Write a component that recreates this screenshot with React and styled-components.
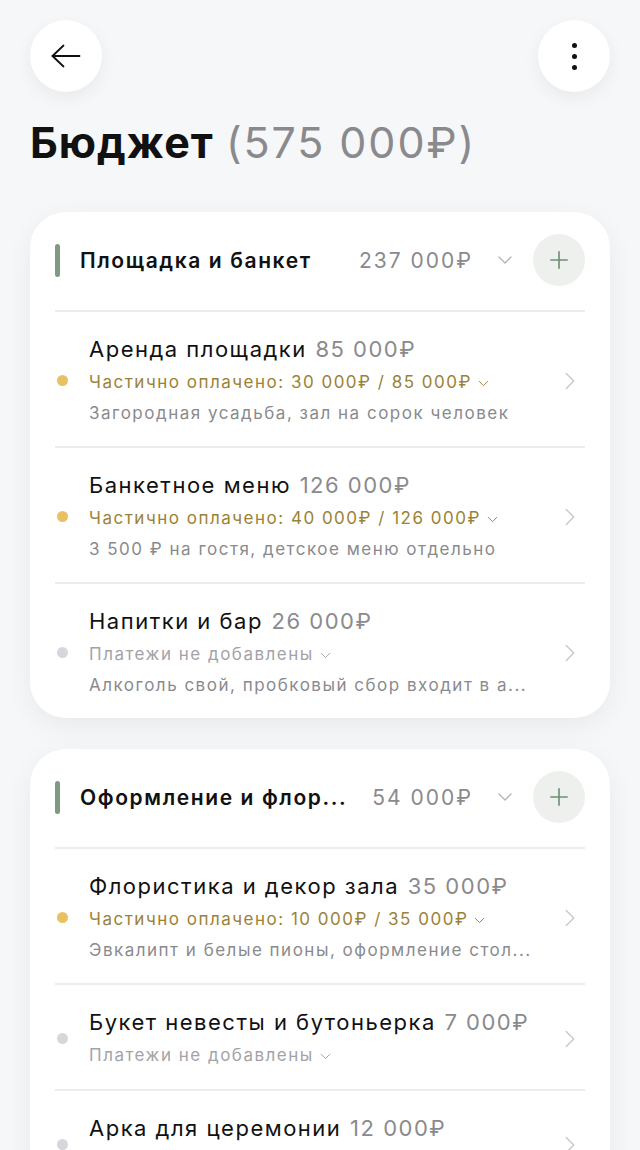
import React from "react";
import styled, { createGlobalStyle } from "styled-components";
import { Plus, ChevronDown, ChevronRight } from "lucide-react";

const GlobalStyle = createGlobalStyle`
  html, body {
    margin: 0;
    padding: 0;
    background: #f6f7f9;
  }
  body {
    font-family: Inter, "Noto Sans", sans-serif;
    color: #111;
    -webkit-font-smoothing: antialiased;
  }
`;

const sections = [
  {
    title: "Площадка и банкет",
    total: "237 000₽",
    items: [
      {
        name: "Аренда площадки",
        price: "85 000₽",
        status: "partial",
        statusText: "Частично оплачено: 30 000₽ / 85 000₽",
        note: "Загородная усадьба, зал на сорок человек",
      },
      {
        name: "Банкетное меню",
        price: "126 000₽",
        status: "partial",
        statusText: "Частично оплачено: 40 000₽ / 126 000₽",
        note: "3 500 ₽ на гостя, детское меню отдельно",
      },
      {
        name: "Напитки и бар",
        price: "26 000₽",
        status: "none",
        statusText: "Платежи не добавлены",
        note: "Алкоголь свой, пробковый сбор входит в а...",
      },
    ],
  },
  {
    title: "Оформление и флор...",
    total: "54 000₽",
    items: [
      {
        name: "Флористика и декор зала",
        price: "35 000₽",
        status: "partial",
        statusText: "Частично оплачено: 10 000₽ / 35 000₽",
        note: "Эвкалипт и белые пионы, оформление стол...",
      },
      {
        name: "Букет невесты и бутоньерка",
        price: "7 000₽",
        status: "none",
        statusText: "Платежи не добавлены",
      },
      {
        name: "Арка для церемонии",
        price: "12 000₽",
        status: "none",
        statusText: "Платежи не добавлены",
      },
    ],
  },
];

const BackArrow = () => (
  <svg width="30" height="24" viewBox="0 0 30 24" fill="none" stroke="#111" strokeWidth="1.8" strokeLinecap="round" strokeLinejoin="round">
    <path d="M28.5 12H1.5" />
    <path d="M12.5 1.5L1.5 12l11 10.5" />
  </svg>
);

export default function App() {
  return (
    <>
      <GlobalStyle />
      <Page>
        <TopBar>
          <RoundButton aria-label="Назад">
            <BackArrow />
          </RoundButton>
          <RoundButton aria-label="Меню">
            <Kebab>
              <span />
              <span />
              <span />
            </Kebab>
          </RoundButton>
        </TopBar>

        <Title>
          Бюджет <Muted>(575 000₽)</Muted>
        </Title>

        {sections.map((s) => (
          <Card key={s.title}>
            <CardHeader>
              <Accent />
              <SectionName>{s.title}</SectionName>
              <SectionTotal>{s.total}</SectionTotal>
              <ChevronDown size={24} strokeWidth={1.3} color="#b3b3b6" />
              <AddButton aria-label="Добавить">
                <Plus size={28} strokeWidth={1.4} />
              </AddButton>
            </CardHeader>

            {s.items.map((it) => (
              <Item key={it.name}>
                <Dot $status={it.status} />
                <ItemBody>
                  <ItemTitle>
                    {it.name} <Price>{it.price}</Price>
                  </ItemTitle>
                  <Status $status={it.status}>
                    {it.statusText}
                    <ChevronDown size={17} strokeWidth={1.4} />
                  </Status>
                  {it.note && <Note>{it.note}</Note>}
                </ItemBody>
                <ChevronRight size={30} strokeWidth={1.1} color="#c8c8cc" />
              </Item>
            ))}
          </Card>
        ))}
      </Page>
    </>
  );
}

const Page = styled.div`
  padding: 20px 30px 40px;
  box-sizing: border-box;
  width: 640px;
`;

const TopBar = styled.div`
  display: flex;
  justify-content: space-between;
  align-items: center;
`;

const RoundButton = styled.button`
  width: 72px;
  height: 72px;
  border-radius: 50%;
  border: none;
  background: #fff;
  box-shadow: 0 6px 18px rgba(0, 0, 0, 0.06);
  display: flex;
  align-items: center;
  justify-content: center;
  color: #111;
  padding: 0;
`;

const Kebab = styled.div`
  display: flex;
  flex-direction: column;
  gap: 6px;

  span {
    width: 5px;
    height: 5px;
    border-radius: 50%;
    background: #111;
  }
`;

const Title = styled.h1`
  margin: 22px 0 42px;
  font-size: 43px;
  line-height: 56px;
  font-weight: 700;
  letter-spacing: 1px;
`;

const Muted = styled.span`
  font-weight: 400;
  color: #8a8a8e;
  letter-spacing: 1.9px;
  margin-left: 1px;
`;

const Card = styled.section`
  background: #fff;
  border-radius: 36px;
  padding: 0 25px;
  margin-bottom: 31px;
  box-shadow: 0 8px 28px rgba(0, 0, 0, 0.06);
`;

const CardHeader = styled.div`
  display: flex;
  align-items: center;
  padding: 22px 0 24px;
  border-bottom: 2px solid #ececee;
`;

const Accent = styled.div`
  width: 5px;
  height: 33px;
  border-radius: 3px;
  background: #7f9a82;
  margin-right: 20px;
  flex-shrink: 0;
`;

const SectionName = styled.div`
  flex: 1;
  font-size: 21px;
  font-weight: 600;
  letter-spacing: 1.6px;
  white-space: nowrap;
  overflow: hidden;
  text-overflow: ellipsis;
`;

const SectionTotal = styled.div`
  font-size: 21px;
  color: #8a8a8e;
  letter-spacing: 2px;
  margin: 0 20px 0 12px;
  white-space: nowrap;
`;

const AddButton = styled.button`
  width: 52px;
  height: 52px;
  border-radius: 50%;
  border: none;
  background: #eef0ee;
  color: #6f8f72;
  display: flex;
  align-items: center;
  justify-content: center;
  margin-left: 16px;
  padding: 0;
`;

const Item = styled.div`
  display: grid;
  grid-template-columns: 34px 1fr 30px;
  align-items: center;
  padding: 21px 0 18px;
  border-bottom: 2px solid #ececee;

  &:last-child {
    border-bottom: none;
  }
`;

const Dot = styled.span`
  width: 11px;
  height: 11px;
  border-radius: 50%;
  margin-left: 2px;
  background: ${(p) => (p.$status === "partial" ? "#e8c262" : "#d6d6dc")};
`;

const ItemBody = styled.div`
  min-width: 0;
`;

const ItemTitle = styled.div`
  font-size: 22px;
  line-height: 33px;
  letter-spacing: 1.5px;
  color: #111;
  white-space: nowrap;
`;

const Price = styled.span`
  color: #8a8a8e;
  margin-left: 1px;
`;

const Status = styled.div`
  font-size: 17px;
  line-height: 32px;
  letter-spacing: 1.5px;
  display: flex;
  align-items: center;
  gap: 3px;
  color: ${(p) => (p.$status === "partial" ? "#9b8236" : "#a3a3a8")};

  svg {
    margin-top: 2px;
    flex-shrink: 0;
  }
`;

const Note = styled.div`
  font-size: 17px;
  line-height: 30px;
  letter-spacing: 1.5px;
  color: #8a8a8e;
  white-space: nowrap;
  overflow: hidden;
  text-overflow: ellipsis;
`;
